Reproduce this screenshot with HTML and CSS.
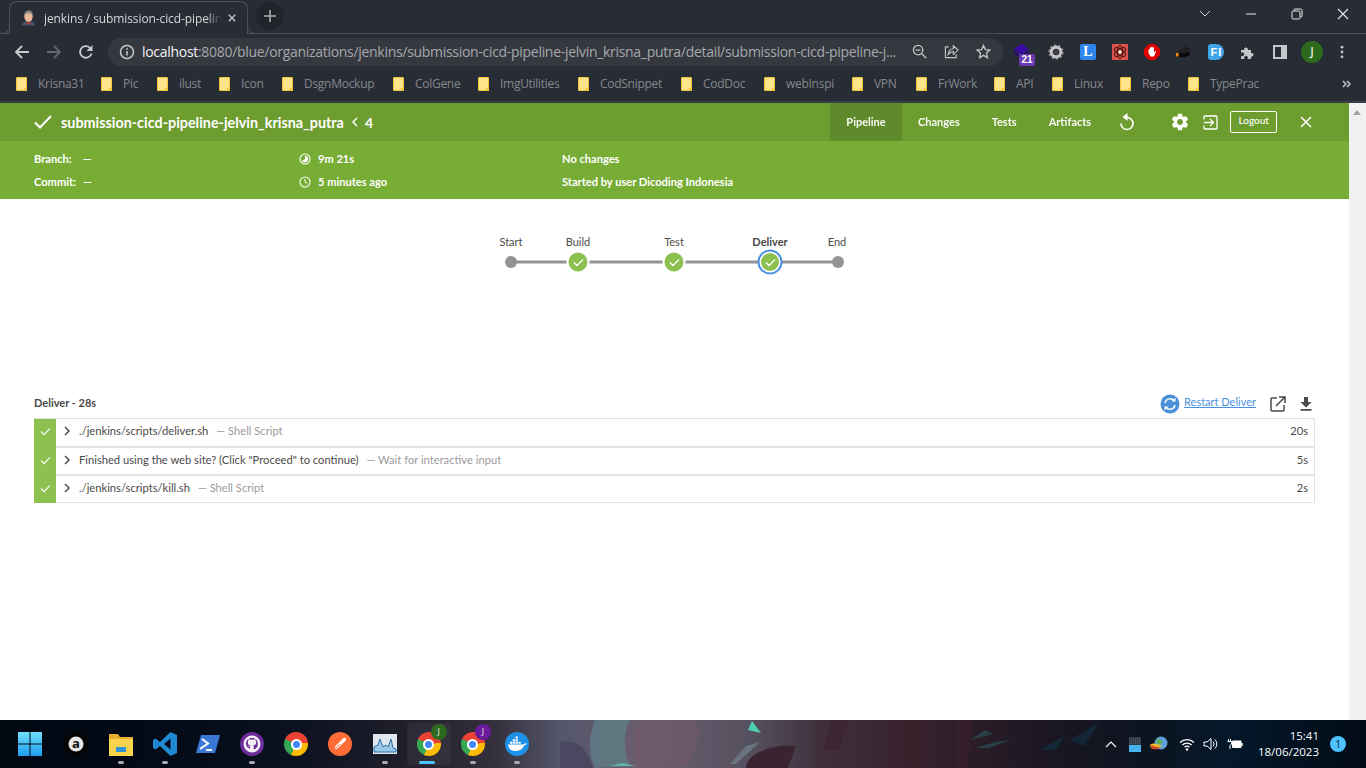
FILE: index.html
```html
<!DOCTYPE html>
<html lang="en">
<head>
<meta charset="utf-8">
<title>jenkins / submission-cicd-pipeline</title>
<link rel="stylesheet" href="styles.css">
</head>
<body>
<div class="browser">
  <div class="tabstrip">
    <div class="tab">
      <svg class="favicon" viewBox="0 0 16 16"><path d="M1 16c0-3 2.500-4.800 7-4.800s7 1.800 7 4.800z" fill="#44546f"/><ellipse cx="8" cy="6.500" rx="4.500" ry="5.500" fill="#e8b79a"/><path d="M3.500 6C3 1.500 6 0 8.500 0s4.500 2 4 6c-.5-2-1.500-3-4-3S4 4 3.500 6z" fill="#8d8a86"/><path d="M5.500 12.300l2.500 1 2.500-1v2.700l-2.500-1-2.500 1z" fill="#c02f2f"/></svg>
      <span class="tab-title">jenkins / submission-cicd-pipelin</span>
      <svg class="tab-close" viewBox="0 0 10 10"><path d="M1 1l8 8M9 1l-8 8" stroke="#c8cacd" stroke-width="1.600"/></svg>
    </div>
    <div class="newtab"><svg viewBox="0 0 12 12"><path d="M6 0v12M0 6h12" stroke="#a9abaf" stroke-width="1.600"/></svg></div>
    <div class="win-controls">
      <svg class="wc wc-chev" viewBox="0 0 12 8"><path d="M1 1l5 5 5-5" fill="none" stroke="#cfd1d4"/></svg>
      <svg class="wc wc-min" viewBox="0 0 12 8"><path d="M1 4h10" stroke="#e8e9ea"/></svg>
      <svg class="wc wc-max" viewBox="0 0 12 12"><path d="M3 2.500V2a1 1 0 0 1 1-1h5.500A1.500 1.500 0 0 1 11 2.500V8a1 1 0 0 1-1 1h-.5" fill="none" stroke="#e8e9ea"/><rect x="1" y="3" width="8" height="8" rx="1.200" fill="none" stroke="#e8e9ea"/></svg>
      <svg class="wc wc-x" viewBox="0 0 12 12"><path d="M1 1l10 10M11 1L1 11" stroke="#e8e9ea" stroke-width="1.100"/></svg>
    </div>
  </div>
  <div class="toolbar">
    <svg class="nav nav-back" viewBox="0 0 16 16"><path d="M15 8H2M8 2L2 8l6 6" fill="none" stroke="#c9cbce" stroke-width="1.800"/></svg>
    <svg class="nav nav-fwd" viewBox="0 0 16 16"><path d="M1 8h13M8 2l6 6-6 6" fill="none" stroke="#65686e" stroke-width="1.800"/></svg>
    <svg class="nav nav-reload" viewBox="0 0 16 16"><path d="M13.500 9.500A5.800 5.800 0 1 1 12 3.800" fill="none" stroke="#c9cbce" stroke-width="1.800"/><path d="M14.500 1v6h-6z" fill="#c9cbce"/></svg>
    <div class="omnibox">
      <svg class="omni-info" viewBox="0 0 16 16"><circle cx="8" cy="8" r="6.500" fill="none" stroke="#c4c6c9" stroke-width="1.500"/><path d="M8 7v4.500M8 4.300v1.500" stroke="#c4c6c9" stroke-width="1.600"/></svg>
      <div class="url"><span class="url-host">localhost</span>:8080/blue/organizations/jenkins/submission-cicd-pipeline-jelvin_krisna_putra/detail/submission-cicd-pipeline-j...</div>
      <svg class="omni-act act-zoom" viewBox="0 0 16 16"><circle cx="6.500" cy="6.500" r="5" fill="none" stroke="#c4c6c9" stroke-width="1.400"/><path d="M10 10l5 5" stroke="#c4c6c9" stroke-width="1.500"/><path d="M4 6.500h5" stroke="#c4c6c9" stroke-width="1.300"/></svg>
      <svg class="omni-act act-share" viewBox="0 0 16 16"><path d="M5 3H1.500v11.500H13V11" fill="none" stroke="#c4c6c9" stroke-width="1.200"/><path d="M4.500 11C5 7 7.500 5 10 5V2l5 4.500L10 11V8c-2.500 0-4 1-5.500 3z" fill="none" stroke="#c4c6c9" stroke-width="1.200"/></svg>
      <svg class="omni-act act-star" viewBox="0 0 16 16"><path d="M8 1.500l2 4.500 4.800.5-3.600 3.200 1 4.800L8 12.100l-4.200 2.400 1-4.800L1.200 6.500 6 6z" fill="none" stroke="#c4c6c9" stroke-width="1.400"/></svg>
    </div>
    <div class="exts">
      <span class="ext ext-stack">
        <svg viewBox="0 0 22 22"><path d="M11 1l10 7-10 7L1 8z" fill="#3a0ca3"/><path d="M1 10l10 7 10-7v3l-10 7-10-7z" fill="#2a0a80"/></svg>
        <b class="ext-badge">21</b>
      </span>
      <svg class="ext" viewBox="0 0 18 18"><circle cx="9" cy="9" r="5.500" fill="none" stroke="#c7c7c7" stroke-width="3.500"/><circle cx="9" cy="9" r="7.500" fill="none" stroke="#9b9b9b" stroke-width="2" stroke-dasharray="2.500 2.200"/><circle cx="9" cy="9" r="2.500" fill="#444"/></svg>
      <span class="ext ext-l">L</span>
      <svg class="ext" viewBox="0 0 16 16"><rect width="16" height="16" fill="#d9534a"/><g fill="none" stroke="#4a1511" stroke-width="1"><ellipse cx="8" cy="8" rx="6.500" ry="2.800" transform="rotate(35 8 8)"/><ellipse cx="8" cy="8" rx="6.500" ry="2.800" transform="rotate(-35 8 8)"/><ellipse cx="8" cy="8" rx="6.500" ry="2.800" transform="rotate(90 8 8)"/></g><circle cx="8" cy="8" r="1.500" fill="#fff"/></svg>
      <svg class="ext" viewBox="0 0 16 16"><path d="M5 0h6l5 5v6l-5 5H5l-5-5V5z" fill="#e00000"/><path d="M4.500 9V5.500a.7.7 0 0 1 1.300 0V4a.7.7 0 0 1 1.400 0v-.5a.7.7 0 0 1 1.400 0V4a.7.7 0 0 1 1.400 0v4.500l1-1.200c.6-.5 1.200 0 .9.600L10 12.500H6.500z" fill="#fff"/></svg>
      <svg class="ext" viewBox="0 0 18 18"><path d="M2 8l9-5 6 2-8 5z" fill="#1d1d1d"/><path d="M4 9l5 2 6-3v5l-5 2H2z" fill="#0a0a0a"/><path d="M0 10h3v4H0z" fill="#e9820c"/><path d="M15 1v5" stroke="#333"/></svg>
      <span class="ext ext-fi">F<i>I</i></span>
      <svg class="ext" viewBox="0 0 16 16"><path d="M1 6h3.200a1.900 1.900 0 1 1 3.600 0H11v3a1.900 1.900 0 1 1 0 3.600V15H7.500a1.900 1.900 0 1 0-3 0H1v-3.300a1.900 1.900 0 1 0 0-2.800z" fill="#c4c6c9"/></svg>
      <span class="ext ext-panel"></span>
      <span class="ext ext-avatar">J</span>
      <svg class="ext ext-dots" viewBox="0 0 4 16"><circle cx="2" cy="2.500" r="1.600" fill="#c4c6c9"/><circle cx="2" cy="8" r="1.600" fill="#c4c6c9"/><circle cx="2" cy="13.500" r="1.600" fill="#c4c6c9"/></svg>
    </div>
  </div>
  <div class="bookmarks">
    <a class="bm b1"><i></i>Krisna31</a>
    <a class="bm b2"><i></i>Pic</a>
    <a class="bm b3"><i></i>ilust</a>
    <a class="bm b4"><i></i>Icon</a>
    <a class="bm b5"><i></i>DsgnMockup</a>
    <a class="bm b6"><i></i>ColGene</a>
    <a class="bm b7"><i></i>ImgUtilities</a>
    <a class="bm b8"><i></i>CodSnippet</a>
    <a class="bm b9"><i></i>CodDoc</a>
    <a class="bm b10"><i></i>webInspi</a>
    <a class="bm b11"><i></i>VPN</a>
    <a class="bm b12"><i></i>FrWork</a>
    <a class="bm b13"><i></i>API</a>
    <a class="bm b14"><i></i>Linux</a>
    <a class="bm b15"><i></i>Repo</a>
    <a class="bm b16"><i></i>TypePrac</a>
    <svg class="bm-more" viewBox="0 0 10 8"><path d="M1 1l3 3-3 3M5 1l3 3-3 3" fill="none" stroke="#c4c6c9" stroke-width="1.500"/></svg>
  </div>
</div>

<div class="viewport">
  <div class="page">
    <header class="run-header">
      <div class="top-bar">
        <svg class="top-check" viewBox="0 0 18 14"><path d="M1 7.500L6 12.500 17 1" fill="none" stroke="#fff" stroke-width="2"/></svg>
        <span class="run-name">submission-cicd-pipeline-jelvin_krisna_putra</span>
        <svg class="run-sep" viewBox="0 0 6 10"><path d="M5 1L1 5l4 4" fill="none" stroke="#fff" stroke-width="1.500"/></svg>
        <span class="run-num">4</span>
        <nav class="top-nav">
          <a class="nav-tab active">Pipeline</a>
          <a class="nav-tab">Changes</a>
          <a class="nav-tab">Tests</a>
          <a class="nav-tab">Artifacts</a>
        </nav>
        <svg class="ic-replay" viewBox="0 0 16 18"><path d="M8 3.500a6 6 0 1 1-6 6" fill="none" stroke="#fff" stroke-width="1.700" transform="translate(0 1)"/><path d="M8.500 0v8L3.500 4z" fill="#fff"/></svg>
        <svg class="ic-gear" viewBox="0 0 24 24"><path fill="#fff" d="M19.430 12.980c.04-.32.07-.64.07-.98s-.03-.66-.07-.98l2.110-1.650c.19-.15.24-.42.12-.64l-2-3.460c-.12-.22-.39-.3-.61-.22l-2.490 1c-.52-.4-1.080-.73-1.690-.98l-.38-2.650C14.460 2.180 14.250 2 14 2h-4c-.25 0-.46.180-.49.420l-.38 2.650c-.61.250-1.170.590-1.690.980l-2.490-1c-.23-.090-.490 0-.61.220l-2 3.460c-.13.220-.07.490.12.640l2.110 1.650c-.04.320-.07.650-.07.980s.03.660.07.980l-2.110 1.650c-.19.150-.24.420-.12.640l2 3.460c.12.220.39.300.61.220l2.490-1c.52.400 1.080.730 1.690.980l.38 2.650c.03.240.24.420.49.420h4c.25 0 .46-.180.49-.420l.38-2.650c.61-.250 1.170-.590 1.690-.980l2.490 1c.23.090.49 0 .61-.220l2-3.460c.12-.220.07-.490-.12-.640zM12 15.500c-1.930 0-3.500-1.570-3.500-3.500s1.570-3.500 3.500-3.500 3.500 1.570 3.500 3.500-1.570 3.500-3.500 3.500z"/></svg>
        <svg class="ic-exit" viewBox="0 0 15 15"><path d="M1 4.500V2a1 1 0 0 1 1-1h11a1 1 0 0 1 1 1v11a1 1 0 0 1-1 1H2a1 1 0 0 1-1-1v-2.500" fill="none" stroke="#fff" stroke-width="1.300"/><path d="M1 7.500h9M7 4l3.500 3.500L7 11" fill="none" stroke="#fff" stroke-width="1.300"/></svg>
        <a class="logout">Logout</a>
        <svg class="ic-close" viewBox="0 0 12 12"><path d="M1 1l10 10M11 1L1 11" stroke="#fff" stroke-width="1.500"/></svg>
      </div>
      <div class="meta">
        <div class="meta-grid">
          <div class="meta-cell"><b class="meta-label label-branch">Branch:</b><span>—</span></div>
          <div class="meta-cell"><svg class="meta-ic" viewBox="0 0 12 12"><circle cx="6" cy="6" r="5" fill="none" stroke="#fff" stroke-width="1.100"/><path d="M6 6V2.500A3.500 3.500 0 1 1 2.800 8z" fill="#fff"/></svg><span>9m 21s</span></div>
          <div class="meta-cell"><span>No changes</span></div>
          <div class="meta-cell"><b class="meta-label label-commit">Commit:</b><span>—</span></div>
          <div class="meta-cell"><svg class="meta-ic" viewBox="0 0 12 12"><circle cx="6" cy="6" r="5" fill="none" stroke="#fff" stroke-width="1.100"/><path d="M6 3v3.200l2.200 1.300" fill="none" stroke="#fff"/></svg><span>5 minutes ago</span></div>
          <div class="meta-cell"><span>Started by user Dicoding Indonesia</span></div>
        </div>
      </div>
    </header>

    <svg class="graph" viewBox="0 0 1332 196">
      <path d="M511 63H838" stroke="#949393" stroke-width="3"/>
      <text class="g-label" x="511" y="47">Start</text>
      <text class="g-label" x="578" y="47">Build</text>
      <text class="g-label" x="674" y="47">Test</text>
      <text class="g-label g-sel" x="770" y="47">Deliver</text>
      <text class="g-label" x="837" y="47">End</text>
      <circle cx="511" cy="63" r="6" fill="#949393"/>
      <circle cx="838" cy="63" r="6" fill="#949393"/>
      <circle cx="578" cy="63" r="10.500" fill="#8cc04f" stroke="#fff" stroke-width="2"/>
      <circle cx="674" cy="63" r="10.500" fill="#8cc04f" stroke="#fff" stroke-width="2"/>
      <circle cx="770" cy="63" r="11.500" fill="#fff" stroke="#4a90e2" stroke-width="2"/>
      <circle cx="770" cy="63" r="9" fill="#8cc04f"/>
      <path d="M574 63.500l3 3 6-6M670 63.500l3 3 6-6M766 63.500l3 3 6-6" fill="none" stroke="#fff" stroke-width="1.300"/>
    </svg>

    <section class="log">
      <div class="log-head">
        <span class="log-title">Deliver - 28s</span>
        <span class="restart-ic"><svg viewBox="0 0 20 20"><circle cx="10" cy="10" r="9.500" fill="#4a90d9"/><path d="M5 9a5.200 5.200 0 0 1 9-2.500M15 11a5.200 5.200 0 0 1-9 2.500" fill="none" stroke="#fff" stroke-width="1.400"/><path d="M15.500 3.500v4h-4zM4.500 16.500v-4h4z" fill="#fff"/></svg></span>
        <a class="restart-link">Restart Deliver</a>
        <svg class="ic-open" viewBox="0 0 16 16"><path d="M7 2H2a1 1 0 0 0-1 1v11a1 1 0 0 0 1 1h11a1 1 0 0 0 1-1V9" fill="none" stroke="#4a4a4a" stroke-width="1.500"/><path d="M6 10l8.500-8.500M9 1h6v6" fill="none" stroke="#4a4a4a" stroke-width="1.500"/></svg>
        <svg class="ic-download" viewBox="0 0 12 14"><path d="M4 0h4v5h3.500L6 10.500.5 5H4zM.5 12h11v1.800H.5z" fill="#4a4a4a"/></svg>
      </div>
      <div class="steps">
        <div class="step">
          <div class="step-status"><svg viewBox="0 0 12 10"><path d="M1 5l3.500 3.500L11 1.500" fill="none" stroke="#fff" stroke-width="1.200"/></svg></div>
          <svg class="chev" viewBox="0 0 6 10"><path d="M1 1l4 4-4 4" fill="none" stroke="#4a4a4a" stroke-width="1.500"/></svg>
          <span class="step-name">./jenkins/scripts/deliver.sh</span><span class="step-type">— Shell Script</span>
          <span class="step-time">20s</span>
        </div>
        <div class="step">
          <div class="step-status"><svg viewBox="0 0 12 10"><path d="M1 5l3.500 3.500L11 1.500" fill="none" stroke="#fff" stroke-width="1.200"/></svg></div>
          <svg class="chev" viewBox="0 0 6 10"><path d="M1 1l4 4-4 4" fill="none" stroke="#4a4a4a" stroke-width="1.500"/></svg>
          <span class="step-name">Finished using the web site? (Click "Proceed" to continue)</span><span class="step-type">— Wait for interactive input</span>
          <span class="step-time">5s</span>
        </div>
        <div class="step">
          <div class="step-status"><svg viewBox="0 0 12 10"><path d="M1 5l3.500 3.500L11 1.500" fill="none" stroke="#fff" stroke-width="1.200"/></svg></div>
          <svg class="chev" viewBox="0 0 6 10"><path d="M1 1l4 4-4 4" fill="none" stroke="#4a4a4a" stroke-width="1.500"/></svg>
          <span class="step-name">./jenkins/scripts/kill.sh</span><span class="step-type">— Shell Script</span>
          <span class="step-time">2s</span>
        </div>
      </div>
    </section>
  </div>
  <div class="scrollbar"><svg viewBox="0 0 8 5"><path d="M0 5l4-5 4 5z" fill="#a3a3a3"/></svg></div>
</div>

<footer class="taskbar">
  <svg class="wallpaper" viewBox="0 0 1366 48" preserveAspectRatio="none">
    <defs>
      <linearGradient id="wp" x1="0" x2="1" y1="0" y2="0">
        <stop offset="0" stop-color="#010812"/><stop offset=".13" stop-color="#040b18"/><stop offset=".22" stop-color="#0c1220"/><stop offset=".3" stop-color="#211f2c"/><stop offset=".36" stop-color="#332f3b"/><stop offset=".41" stop-color="#54566a"/><stop offset=".47" stop-color="#6b5e6f"/><stop offset=".55" stop-color="#55505f"/><stop offset=".6" stop-color="#40303c"/><stop offset=".67" stop-color="#38222c"/><stop offset=".76" stop-color="#1c1722"/><stop offset=".84" stop-color="#0c1420"/><stop offset=".9" stop-color="#04182a"/><stop offset="1" stop-color="#010b16"/>
      </linearGradient>
      <linearGradient id="winlogo" x1="0" x2="0" y1="0" y2="1"><stop offset="0" stop-color="#6fe0fb"/><stop offset="1" stop-color="#1c9cf0"/></linearGradient>
    </defs>
    <rect width="1366" height="48" fill="url(#wp)"/>
    <path d="M560 22c22-4 28 12 33 26h-33z" fill="#4a4860"/>
    <path d="M595 0h35c-8 16-6 32 0 46l-35 2c-8-18-6-32 0-48z" fill="#5f8088" opacity=".75"/>
    <path d="M610 46l12-3 14 3z" fill="#5ec4b0" opacity=".85"/>
    <path d="M640 0h55c8 18-2 36-10 46l-45 1c-8-16-8-30 0-47z" fill="#6f5868" opacity=".7"/>
    <path d="M748 10l4-9 9 12z" fill="#4fd0b0"/>
    <path d="M730 44l16-18 14-4-24 22z" fill="#7f9da4" opacity=".45"/>
    <path d="M746 48c0-14 24-24 50-22l-8 22z" fill="#3a2431"/>
    <path d="M830 0h18l-8 30h-16zM890 0h26l-5 48h-22zM955 0h18l-6 48h-12z" fill="#3a1f2b" opacity=".5"/>
    <path d="M975 28l20-6 15-2-20 8zM970 20l15-10 8 4z" fill="#2f6a70" opacity=".45"/>
    <path d="M1040 30l24-14-8 14zM1070 20l30-18-16 24z" fill="#12425a" opacity=".4"/>
  </svg>
  <div class="tb-apps">
    <span class="tb-app tb-win"><svg class="tb-ic" viewBox="0 0 24 24"><path d="M0 0h11.500v11.500H0zM12.500 0H24v11.500H12.500zM0 12.500h11.500V24H0zM12.500 12.500H24V24H12.500z" fill="url(#winlogo)"/></svg></span>
    <span class="tb-app tb-a"><svg class="tb-ic" viewBox="0 0 24 24"><circle cx="12" cy="12" r="12" fill="#050505"/><circle cx="12" cy="12" r="7.500" fill="#e6e6e6"/><text class="a-glyph" x="12" y="16">a</text></svg></span>
    <span class="tb-app tb-folder has-dot"><svg class="tb-ic" viewBox="0 0 24 24"><path d="M0 2h9l2 3h13v19H0z" fill="#e8ae2b"/><path d="M0 7h24v17H0z" fill="#f8d34e"/><path d="M7 15h10v5H7z" fill="#2f95d6"/></svg></span>
    <span class="tb-app tb-code has-dot"><svg class="tb-ic" viewBox="0 0 24 24"><path d="M17.500 0L24 3v18l-6.500 3L7 14l-4.500 3.500L0 16V8l2.500-1.500L7 10zM17.500 6.500L11 12l6.500 5.500z" fill="#1f8ad2"/></svg></span>
    <span class="tb-app"><svg class="tb-ic" viewBox="0 0 24 24"><path d="M5 3h19l-5 18H0z" fill="#3a78d8"/><path d="M6 7l6 4.500L4 17" fill="none" stroke="#fff" stroke-width="2"/><path d="M10 18h6" stroke="#fff" stroke-width="2"/></svg></span>
    <span class="tb-app has-dot"><svg class="tb-ic" viewBox="0 0 24 24"><circle cx="12" cy="12" r="12" fill="#6e2c9a"/><circle cx="12" cy="12" r="8.500" fill="#f2f0f5"/><path d="M12 6c-3.500 0-6 2.400-6 5.500 0 2.500 1.500 4.500 4 5.300v-2c-1.500.3-2-.5-2.300-1.200 1 .1 1.300 1 2.500.9.100-.5.300-.9.600-1.100-2-.3-3-1.200-3-3 0-.7.300-1.300.7-1.800-.1-.5-.1-1.100.1-1.600.7 0 1.300.3 1.800.7a6.500 6.500 0 0 1 3.200 0c.5-.4 1.100-.7 1.800-.7.200.5.200 1.100.1 1.600.4.5.7 1.100.7 1.800 0 1.800-1 2.700-3 3 .4.300.6.800.6 1.400v2.700c2.500-.8 4-2.800 4-5.300C18 8.400 15.500 6 12 6z" fill="#6e2c9a"/></svg></span>
    <span class="tb-app"><span class="chrome-logo"></span></span>
    <span class="tb-app"><svg class="tb-ic" viewBox="0 0 24 24"><circle cx="12" cy="12" r="12" fill="#ff6c37"/><path d="M6 18l1.500-4L15 6.500c1-1 3-1.200 3-.2 0 1-.2 2-1 3L9.500 16.500z" fill="#fff"/><path d="M6 18l6-6" stroke="#ff6c37"/></svg></span>
    <span class="tb-app has-dot"><svg class="tb-ic tb-chart" viewBox="0 0 24 20"><rect width="24" height="20" fill="#dfe8ee"/><path d="M1 18V13l4-2 2-6 3 8 3-2 2 2 3-8 2 9 3 1v3z" fill="#9cc9e8" stroke="#2b6ea8"/></svg></span>
    <span class="tb-app active-app"><span class="chrome-logo"></span><span class="badge badge-green">J</span></span>
    <span class="tb-app has-dot"><span class="chrome-logo"></span><span class="badge badge-purple">J</span></span>
    <span class="tb-app has-dot"><svg class="tb-ic" viewBox="0 0 24 24"><circle cx="12" cy="12" r="12" fill="#1d91e8"/><path d="M3 12.500h15c1 0 1.500-1 2.500-1.200.6 0 1 .2 1.200.5-.5 1-1.700 1.300-2.500 1.400C18 17 14.500 19 10 19c-4 0-6.500-2.500-7-6.500z" fill="#fff"/><path d="M5 9.800h2.300v2H5zM7.800 9.800h2.300v2H7.800zM10.600 9.800h2.300v2h-2.300zM7.800 7.200h2.300v2H7.800zM10.600 7.200h2.300v2h-2.300zM10.600 4.600h2.300v2h-2.300zM13.400 9.800h2.300v2h-2.300z" fill="#fff"/></svg></span>
  </div>
  <div class="tray">
    <svg class="tr-caret" viewBox="0 0 12 7"><path d="M1 6l5-5 5 5" fill="none" stroke="#fff" stroke-width="1.100"/></svg>
    <svg class="tr-ic" viewBox="0 0 12 15"><rect width="12" height="15" fill="#46b3ee"/><rect width="12" height="8" fill="#2f3b46"/><path d="M0 2h12M0 4h12M0 6h12" stroke="#5a6670" stroke-dasharray="1 1"/></svg>
    <svg class="tr-ic tr-idm" viewBox="0 0 18 16"><circle cx="11" cy="7" r="6.500" fill="#5ea0d8"/><path d="M6 4c3-2 6 0 6 2s-3 3-4 2z" fill="#5db04a"/><path d="M0 9c3-3 8-1 12 1-3 3-8 4-11 2z" fill="#e8c22c"/><path d="M1 9c3 1 7 3 10 2-3 3-7 3-10 1z" fill="#d9482c"/></svg>
    <svg class="tr-ic tr-wifi" viewBox="0 0 16 13"><path d="M1 4.500a10 10 0 0 1 14 0M3.300 7a7 7 0 0 1 9.400 0M5.600 9.300a3.600 3.600 0 0 1 4.800 0" fill="none" stroke="#fff" stroke-width="1.200"/><circle cx="8" cy="11.500" r="1.200" fill="#fff"/></svg>
    <svg class="tr-ic tr-vol" viewBox="0 0 16 14"><path d="M1 5h3l4-3.500v11L4 9H1z" fill="none" stroke="#fff"/><path d="M10 4.500a3.500 3.500 0 0 1 0 5M12 2.500a6.500 6.500 0 0 1 0 9" fill="none" stroke="#fff"/></svg>
    <svg class="tr-ic tr-batt" viewBox="0 0 16 12"><path d="M1.500 1v2.500M3.500 1v2.500M0.500 3.500h4V6L3 7.500V11" fill="none" stroke="#fff"/><rect x="5" y="2.500" width="9.500" height="7.500" rx="1" fill="#fff"/><path d="M15 5v3" stroke="#fff" stroke-width="1.500"/></svg>
    <div class="clock"><span>15:41</span><span>18/06/2023</span></div>
    <span class="notif">1</span>
  </div>
</footer>
</body>
</html>
```
FILE: styles.css
```css
* { box-sizing: border-box; }
html, body { margin: 0; padding: 0; }
body {
  width: 1366px;
  height: 768px;
  overflow: hidden;
  display: flex;
  flex-direction: column;
  font-family: "Lato", "Open Sans", sans-serif;
  background: #fff;
}
svg { display: block; flex: none; }

/* browser chrome */
.browser { height: 103px; background: #282c34; flex: none; display: flex; flex-direction: column; border-bottom: 2px solid #3b3e46; font-family: "Open Sans", "Noto Sans", sans-serif; }
.tabstrip { height: 34px; display: flex; align-items: flex-end; padding-left: 9px; border-bottom: 1px solid #4c4f57; flex: none; }
.tab { position: relative; width: 239px; height: 33px; margin-bottom: -1px; background: #282c34; border: 1px solid #4c4f57; border-bottom: 0; border-radius: 8px 8px 0 0; display: flex; align-items: center; padding-left: 11px; }
.tab::before { content: ""; position: absolute; left: -9px; bottom: 0; width: 8px; height: 8px; border-right: 1px solid #4c4f57; border-bottom: 1px solid #4c4f57; border-radius: 0 0 8px 0; }
.tab::after { content: ""; position: absolute; right: -9px; bottom: 0; width: 8px; height: 8px; border-left: 1px solid #4c4f57; border-bottom: 1px solid #4c4f57; border-radius: 0 0 0 8px; }
.favicon { width: 15px; height: 16px; margin-right: 8px; }
.tab-title { width: 177px; white-space: nowrap; font-size: 12px; letter-spacing: -.1px; color: #d5d7da; -webkit-mask-image: linear-gradient(90deg, #000 92%, transparent); mask-image: linear-gradient(90deg, #000 92%, transparent); }
.tab-close { width: 8px; height: 8px; margin-left: 7px; }
.newtab { width: 28px; height: 28px; margin: 0 0 3px 8px; border-radius: 50%; background: #21252b; display: flex; align-items: center; justify-content: center; }
.newtab svg { width: 12px; height: 12px; }
.win-controls { margin-left: auto; align-self: flex-start; display: flex; align-items: center; height: 28px; }
.wc { width: 12px; }
.wc-chev { height: 8px; margin-right: 34px; }
.wc-min { height: 8px; margin-right: 34px; }
.wc-max { height: 12px; margin-right: 34px; }
.wc-x { height: 12px; margin-right: 17px; }

.toolbar { height: 35px; display: flex; align-items: center; padding-left: 14px; flex: none; }
.nav { width: 16px; height: 16px; }
.nav-back { margin-right: 16px; }
.nav-fwd { margin-right: 16px; }
.nav-reload { margin-right: 14px; }
.omnibox { width: 895px; height: 28px; border-radius: 14px; background: #35383f; display: flex; align-items: center; padding-left: 11px; }
.omni-info { width: 16px; height: 16px; margin-right: 7px; }
.url { width: 763px; white-space: nowrap; font-size: 14px; letter-spacing: -.3px; color: #a5a8ad; }
.url-host { color: #f2f3f4; }
.omni-act { width: 15px; height: 15px; }
.act-zoom { margin-left: 7px; }
.act-share { margin-left: 17px; }
.act-star { margin-left: 17px; }
.exts { display: flex; align-items: center; margin-left: 15px; }
.ext { width: 16px; height: 16px; margin-right: 16px; flex: none; display: block; }
.ext-stack { position: relative; width: 22px; height: 22px; margin-left: -5px; margin-right: 13px; }
.ext-stack svg { width: 17px; height: 17px; position: absolute; left: 0; top: 2px; }
.ext-badge { position: absolute; left: 6px; top: 13px; width: 16px; height: 12px; border-radius: 2px; background: #6a3ab2; color: #fff; font: 700 10px/12px "Liberation Sans", sans-serif; text-align: center; }
.ext-l { border-radius: 2px; background: #2d85ee; color: #fff; font: 700 14px/16px "Liberation Serif", serif; text-align: center; }
.ext-fi { border-radius: 3px 8px 8px 3px; background: #3ea6e6; color: #fff; font: 700 11px/16px "Liberation Sans", sans-serif; text-align: center; }
.ext-fi i { font-style: normal; margin-left: 1px; }
.ext-panel { width: 14px; height: 14px; border: 2px solid #c4c6c9; border-right-width: 6px; margin-left: 1px; margin-right: 15px; }
.ext-avatar { width: 22px; height: 22px; border-radius: 50%; background: #2d6a1e; color: #dfe8da; font: 600 12px/22px "Open Sans", sans-serif; text-align: center; margin-left: -1px; margin-right: 17px; }
.ext-dots { width: 4px; height: 14px; margin: 0; }

.bookmarks { height: 32px; display: flex; align-items: center; padding: 0 0 3px 16px; flex: none; }
.bm { display: flex; align-items: center; font-size: 12px; letter-spacing: -.28px; color: #85888e; white-space: nowrap; }
.bm i { position: relative; width: 11px; height: 14px; margin-right: 11px; background: #ffe48a; border: 1px solid #f3c53b; border-radius: 1px; flex: none; }
.bm i::after { content: ""; position: absolute; right: -1px; bottom: -1px; width: 3px; height: 3px; background: #f3c53b; }
.b1 { width: 85px; } .b2 { width: 56px; } .b3 { width: 62px; } .b4 { width: 63px; }
.b5 { width: 111px; } .b6 { width: 85px; } .b7 { width: 100px; } .b8 { width: 103px; }
.b9 { width: 83px; } .b10 { width: 88px; } .b11 { width: 64px; } .b12 { width: 78px; }
.b13 { width: 58px; } .b14 { width: 68px; } .b15 { width: 68px; } .b16 { width: 100px; }
.bm-more { width: 10px; height: 8px; margin-left: 54px; }

/* page */
.viewport { flex: 1; min-height: 0; display: flex; }
.page { flex: 1; min-width: 0; background: #fff; }
.scrollbar { width: 17px; background: #f1f1f1; padding: 7px 4px 0 4px; flex: none; }
.scrollbar svg { width: 8px; height: 5px; }

.run-header { color: #fff; }
.top-bar { height: 38px; background: #6d9c2f; display: flex; align-items: center; padding-left: 34px; }
.top-check { width: 18px; height: 14px; margin-right: 9px; }
.run-name { font-size: 14.350px; font-weight: 700; white-space: nowrap; }
.run-sep { width: 6px; height: 10px; margin: 0 7px 0 8px; }
.run-num { font-size: 14px; font-weight: 700; }
.top-nav { display: flex; align-self: stretch; margin-left: 457px; }
.nav-tab { display: flex; align-items: center; padding: 0 16px 2px; font-size: 11px; font-weight: 700; white-space: nowrap; opacity: .95; }
.nav-tab.active { background: #5f8a2c; width: 72px; justify-content: center; padding: 0 0 2px; }
.ic-replay { width: 16px; height: 18px; margin-left: 12px; }
.ic-gear { width: 20px; height: 20px; margin-left: 35px; }
.ic-exit { width: 15px; height: 15px; margin-left: 13px; }
.logout { width: 47px; height: 22px; margin-left: 12px; border: 1px solid #fff; border-radius: 2px; font-size: 10px; line-height: 17px; text-align: center; font-weight: 500; }
.ic-close { width: 12px; height: 12px; margin-left: 23px; }

.meta { height: 58px; background: #78ad35; padding-left: 34px; display: flex; align-items: center; }
.meta-grid { display: grid; grid-template-columns: 265px 263px auto; grid-auto-rows: 23px; }
.meta-cell { display: flex; align-items: center; font-size: 11.100px; font-weight: 700; white-space: nowrap; }
.meta-label { font-weight: 700; }
.label-branch { margin-right: 11px; }
.label-commit { margin-right: 7px; }
.meta-ic { width: 12px; height: 12px; margin-right: 7px; }

.graph { width: 1332px; height: 196px; display: block; }
.g-label { font-family: "Lato", sans-serif; font-size: 11px; fill: #4a4a4a; text-anchor: middle; }
.g-sel { font-weight: 700; }

.log { padding: 0 0 0 34px; width: 1315px; }
.log-head { height: 23px; display: flex; align-items: center; padding-bottom: 6px; }
.log-title { font-size: 11px; font-weight: 700; color: #4a4a4a; margin: 0 auto 2px 0; }
.restart-ic { width: 20px; height: 20px; margin-right: 4px; }
.restart-ic svg { width: 20px; height: 20px; }
.restart-link { font-size: 11px; color: #4a90e2; text-decoration: underline; white-space: nowrap; margin-bottom: 4px; }
.ic-open { width: 16px; height: 16px; margin-left: 14px; }
.ic-download { width: 12px; height: 14px; margin: 0 3px 0 14px; }

.steps { border-top: 1px solid #e0e0e0; }
.step { height: 28.500px; display: flex; align-items: center; border-right: 1px solid #e0e0e0; border-bottom: 2px solid #e4e4e4; font-size: 11.180px; }
.step:last-child { border-bottom-width: 1px; height: 27px; }
.step-status { width: 22px; align-self: stretch; background: #8cc04f; display: flex; align-items: center; justify-content: center; margin-bottom: -2px; padding-bottom: 3px; }
.step:last-child .step-status { margin-bottom: -1px; }
.step-status svg { width: 11px; height: 9px; }
.chev { width: 6px; height: 10px; margin: 0 9px 2px 8px; }
.step-name { color: #4a4a4a; white-space: nowrap; margin-bottom: 3px; }
.step-type { color: #9b9b9b; margin: 0 0 3px 8px; white-space: nowrap; }
.step-time { margin: 0 6px 3px auto; color: #4a4a4a; }

/* taskbar */
.taskbar { position: relative; height: 48px; flex: none; display: flex; align-items: center; font-family: "Open Sans", sans-serif; overflow: hidden; }
.wallpaper { position: absolute; left: 0; top: 0; width: 1366px; height: 48px; }
.tb-apps { position: relative; display: flex; padding-left: 10px; height: 48px; }
.tb-app { position: relative; width: 44.200px; height: 48px; display: flex; align-items: center; justify-content: center; }
.tb-win { margin-left: -1px; }
.tb-win svg { margin-right: 2px; }
.tb-a svg { margin-left: 2px; }
.tb-folder svg { margin-left: 4px; }
.tb-code svg { margin-left: 2px; }
.tb-folder.has-dot::after { left: 21px; }
.tb-code.has-dot::after { left: 20px; }
.tb-ic { width: 24px; height: 24px; }
.tb-chart { height: 20px; }
.a-glyph { font: 700 13px "Open Sans", sans-serif; fill: #111; text-anchor: middle; }
.has-dot::after { content: ""; position: absolute; left: 19px; bottom: 4px; width: 6px; height: 3px; border-radius: 2px; background: #a8abb0; }
.active-app { background: rgba(255,255,255,.05); border-radius: 4px; height: 42px; margin-top: 3px; }
.active-app::after { content: ""; position: absolute; left: 12px; bottom: 1px; width: 16px; height: 3px; border-radius: 2px; background: #4cc2ff; }
.chrome-logo { position: relative; width: 24px; height: 24px; border-radius: 50%; background: conic-gradient(#ea4335 0deg 85deg, #fbbc05 85deg 205deg, #34a853 205deg 295deg, #ea4335 295deg); display: block; }
.chrome-logo::after { content: ""; position: absolute; left: 6.500px; top: 6.500px; width: 11px; height: 11px; border-radius: 50%; background: #4285f4; border: 2px solid #fff; box-sizing: border-box; }
.badge { position: absolute; left: 24px; top: 4px; width: 16px; height: 16px; border-radius: 50%; font-size: 9px; line-height: 16px; text-align: center; color: #e8e8e8; }
.active-app .badge { top: 1px; }
.badge-green { background: #2d6a1e; }
.badge-purple { background: #6a1b9a; }

.tray { position: relative; margin-left: auto; display: flex; align-items: center; height: 48px; padding-right: 20px; }
.tr-caret { width: 12px; height: 7px; margin-right: 12px; }
.tr-ic { width: 12px; height: 15px; margin-right: 9px; }
.tr-idm { width: 18px; height: 16px; margin-right: 11px; }
.tr-wifi { width: 16px; height: 13px; margin-right: 8px; }
.tr-vol { width: 16px; height: 14px; margin-right: 8px; }
.tr-batt { width: 16px; height: 12px; margin-right: 4px; }
.clock { width: 72px; display: flex; flex-direction: column; align-items: flex-end; font-size: 11.500px; line-height: 16px; color: #fff; margin-right: 11px; }
.notif { width: 16px; height: 16px; border-radius: 50%; background: #4cc2ff; color: #0a1a25; font-size: 10px; line-height: 16px; text-align: center; }
```
